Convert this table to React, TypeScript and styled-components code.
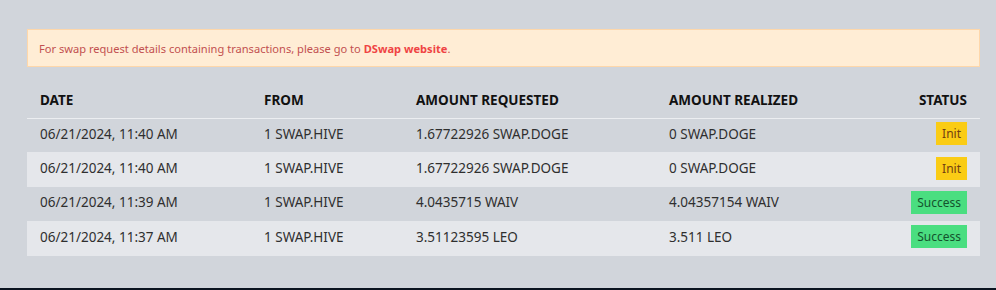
import React from 'react';
import styled, { createGlobalStyle } from 'styled-components';

type Status = 'Init' | 'Success';

interface SwapRow {
  date: string;
  from: string;
  requested: string;
  realized: string;
  status: Status;
}

const rows: SwapRow[] = [
  { date: '06/21/2024, 11:40 AM', from: '1 SWAP.HIVE', requested: '1.67722926 SWAP.DOGE', realized: '0 SWAP.DOGE', status: 'Init' },
  { date: '06/21/2024, 11:40 AM', from: '1 SWAP.HIVE', requested: '1.67722926 SWAP.DOGE', realized: '0 SWAP.DOGE', status: 'Init' },
  { date: '06/21/2024, 11:39 AM', from: '1 SWAP.HIVE', requested: '4.0435715 WAIV', realized: '4.04357154 WAIV', status: 'Success' },
  { date: '06/21/2024, 11:37 AM', from: '1 SWAP.HIVE', requested: '3.51123595 LEO', realized: '3.511 LEO', status: 'Success' },
];

function App() {
  return (
    <>
      <GlobalStyle />
      <Page>
        <Content>
          <Notice>
            For swap request details containing transactions, please go to{' '}
            <NoticeLink href="#">DSwap website</NoticeLink>.
          </Notice>
          <Table>
            <thead>
              <HeadRow>
                <HeadCell>Date</HeadCell>
                <HeadCell>From</HeadCell>
                <HeadCell>Amount Requested</HeadCell>
                <HeadCell>Amount Realized</HeadCell>
                <HeadCell $right>Status</HeadCell>
              </HeadRow>
            </thead>
            <tbody>
              {rows.map((row, i) => (
                <BodyRow key={i} $striped={i % 2 === 1}>
                  <Cell>{row.date}</Cell>
                  <Cell>{row.from}</Cell>
                  <Cell>{row.requested}</Cell>
                  <Cell>{row.realized}</Cell>
                  <Cell $right>
                    <Badge $status={row.status}>{row.status}</Badge>
                  </Cell>
                </BodyRow>
              ))}
            </tbody>
          </Table>
        </Content>
        <Footer />
      </Page>
    </>
  );
}
export default App;

const GlobalStyle = createGlobalStyle`
  html, body {
    margin: 0;
    padding: 0;
    background: #d1d5db;
    font-family: "Noto Sans", "Open Sans", sans-serif;
  }
`;

const Page = styled.div`
  display: flex;
  flex-direction: column;
  min-height: 290px;
  background: #d1d5db;
`;

const Content = styled.main`
  display: flex;
  flex-direction: column;
  row-gap: 15px;

  height: 288px;
  box-sizing: border-box;
  padding: 29px 16px 0 27px;
`;

const Notice = styled.div`
  height: 38px;
  box-sizing: border-box;
  display: flex;
  align-items: center;
  padding: 0 11px;

  border: 1px solid #fed7aa;
  background: #ffedd5;

  font-size: 11.1px;
  color: #c25050;
  white-space: pre;
`;

const NoticeLink = styled.a`
  color: #ef4444;
  font-weight: 700;
  text-decoration: none;
`;

const Table = styled.table`
  width: 100%;
  border-collapse: collapse;
  font-size: 13.5px;
`;

const HeadRow = styled.tr`
  height: 36px;
  border-bottom: 1px solid #eceef1;
`;

const HeadCell = styled.th<{ $right?: boolean }>`
  padding: 0 13px;
  text-align: ${({ $right }) => ($right ? 'right' : 'left')};
  text-transform: uppercase;
  font-weight: 700;
  color: #111111;
  &:nth-child(1) { width: 198px; }
  &:nth-child(2) { width: 126px; }
  &:nth-child(3) { width: 227px; }
`;

const BodyRow = styled.tr<{ $striped: boolean }>`
  height: 34.4px;
  background: ${({ $striped }) => ($striped ? '#e5e7eb' : 'transparent')};
`;

const Cell = styled.td<{ $right?: boolean }>`
  padding: 0 13px 3px;
  text-align: ${({ $right }) => ($right ? 'right' : 'left')};
  color: #2f2f2f;
`;

const Badge = styled.span<{ $status: Status }>`
  display: inline-block;
  padding: 3px 6px;
  line-height: 17px;
  font-size: 12px;
  background: ${({ $status }) => ($status === 'Init' ? '#facc15' : '#4ade80')};
  color: ${({ $status }) => ($status === 'Init' ? '#713f12' : '#14532d')};
`;

const Footer = styled.footer`
  height: 2px;
  background: #0b1420;
`;
